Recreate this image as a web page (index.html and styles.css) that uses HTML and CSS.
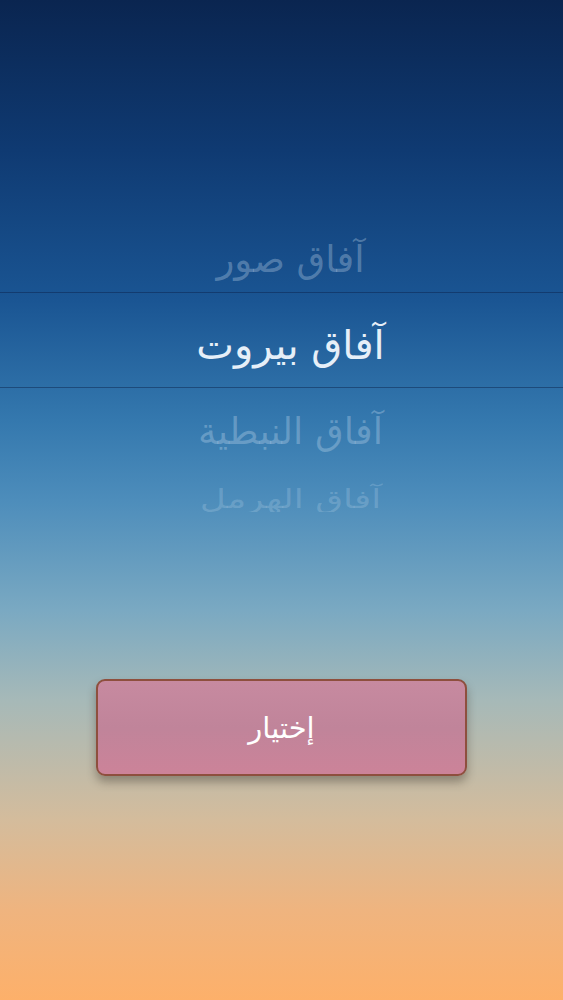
FILE: index.html
```html
<!DOCTYPE html>
<html lang="ar" dir="rtl">
<head>
  <meta charset="UTF-8">
  <meta name="viewport" content="width=device-width, initial-scale=1.0">
  <title>اختيار الفرع</title>
  <link rel="stylesheet" href="styles.css">
</head>
<body>
  <div class="screen">
    <div class="picker">
      <div class="picker-row far">آفاق صور</div>
      <div class="picker-row selected">آفاق بيروت</div>
      <div class="picker-row near">آفاق النبطية</div>
      <div class="picker-row edge">آفاق الهرمل</div>
    </div>
    <div class="actions">
      <button class="choose-button">إختيار</button>
    </div>
  </div>
</body>
</html>
```

FILE: styles.css
```css
* {
  margin: 0;
  padding: 0;
  box-sizing: border-box;
}
body {
  font-family: "DejaVu Sans", "Noto Sans", sans-serif;
  background-color: #0a2550;
}
.screen {
  width: 100%;
  height: 1000px;
  display: flex;
  flex-direction: column;
  background: linear-gradient(180deg,
    #0a2550 0%,
    #0f3a72 15%,
    #1a5593 30%,
    #3478ae 42%,
    #4d8dbb 50%,
    #7aa9c2 61%,
    #a6b9b8 70%,
    #d4bc9c 82%,
    #efb47f 91%,
    #fdb06a 100%);
}

/* wheel picker */
.picker {
  margin-top: 226px;
  height: 286px;
  overflow: hidden;
  display: flex;
  flex-direction: column;
}
.picker-row {
  flex-shrink: 0;
  display: flex;
  align-items: center;
  justify-content: center;
  padding-left: 18px;
  color: rgba(220, 235, 250, 0.3);
  font-size: 37px;
  line-height: 1;
}
.picker-row.far {
  height: 66px;
}
.picker-row.selected {
  height: 96px;
  padding-top: 10px;
  font-size: 40px;
  color: #e6eff8;
  border-top: 1px solid rgba(10, 30, 70, 0.45);
  border-bottom: 1px solid rgba(10, 30, 70, 0.45);
}
.picker-row.near {
  height: 86px;
  color: rgba(220, 235, 250, 0.28);
}
.picker-row.edge {
  height: 44px;
  font-size: 36px;
  color: rgba(220, 235, 250, 0.2);
  transform: scaleY(0.72);
  align-items: flex-end;
}

.actions {
  margin-top: 167px;
  display: flex;
  justify-content: center;
}
.choose-button {
  width: 371px;
  height: 97px;
  border-radius: 9px;
  border: 2px solid #8e4f3e;
  background: linear-gradient(180deg, #c78aa0 0%, #c0849a 50%, #cc8399 100%);
  box-shadow: 0 6px 10px rgba(40, 30, 20, 0.35);
  color: #ffffff;
  font-family: "DejaVu Sans", sans-serif;
  font-size: 29px;
  cursor: pointer;
}
```
